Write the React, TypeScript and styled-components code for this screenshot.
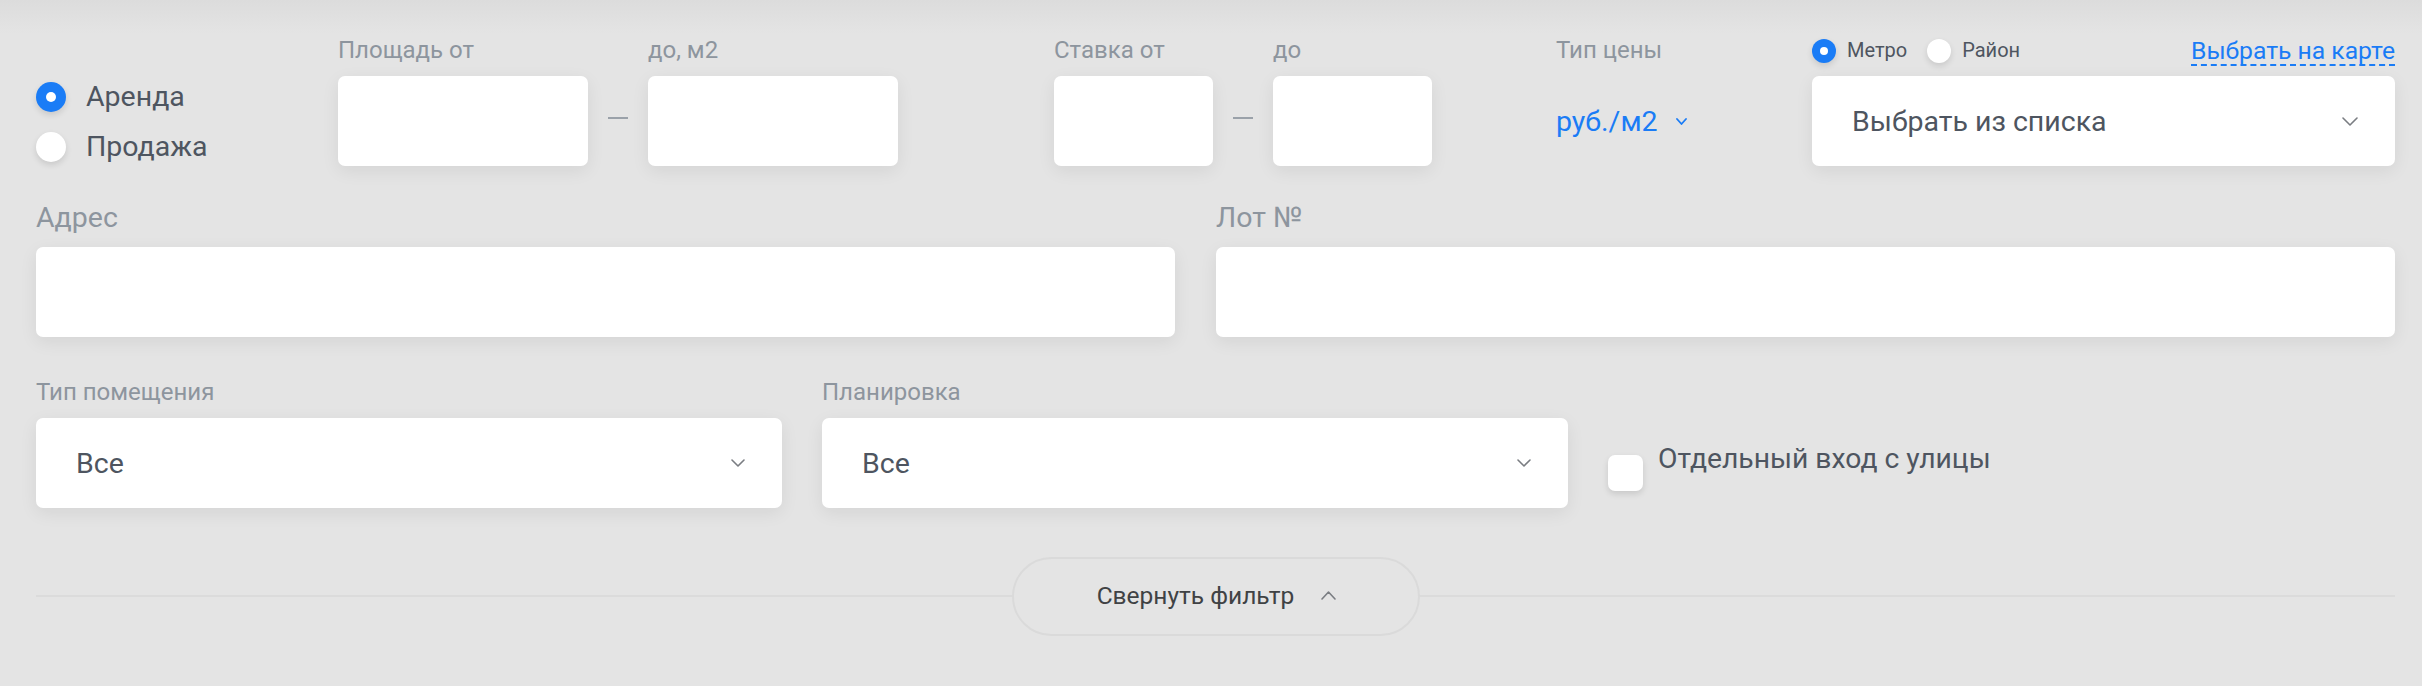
import React from "react";
import styled, { createGlobalStyle } from "styled-components";

const GlobalStyle = createGlobalStyle`
  html, body { margin: 0; padding: 0; }
  body {
    background: #e4e4e4;
    font-family: Roboto, "Liberation Sans", Arial, sans-serif;
    color: #4e5560;
  }
  * { box-sizing: border-box; }
`;

const Page = styled.div`
  width: 2422px;
  height: 686px;
  padding: 37px 27px 0 36px;
  background: linear-gradient(#dcdcdc 0px, #e4e4e4 34px, #e4e4e4 100%);
  display: flex;
  flex-direction: column;
`;

const TopRow = styled.div`
  display: flex;
  align-items: flex-start;
`;

const Section = styled.div<{ $width?: number; $offset?: number }>`
  ${(p) => (p.$width ? `width: ${p.$width}px; flex: none;` : "flex: 1;")}
  margin-left: ${(p) => p.$offset ?? 0}px;
  display: flex;
  align-items: flex-start;
`;

const RadioGroup = styled.div`
  display: flex;
  flex-direction: column;
  gap: 20px;
  padding-top: 45px;
`;

const RadioItem = styled.label<{ $small?: boolean }>`
  display: flex;
  align-items: center;
  gap: ${(p) => (p.$small ? 11 : 20)}px;
  font-size: ${(p) => (p.$small ? 20 : 28.5)}px;
  line-height: ${(p) => (p.$small ? 27 : 30)}px;
  color: #4e5560;
  cursor: pointer;
`;

const RadioDot = styled.span<{ $checked?: boolean; $size: number }>`
  width: ${(p) => p.$size}px;
  height: ${(p) => p.$size}px;
  border-radius: 50%;
  flex: none;
  background: ${(p) => (p.$checked ? "#1a7cf6" : "#ffffff")};
  box-shadow: 0 3px 6px rgba(0, 0, 0, 0.12);
  display: flex;
  align-items: center;
  justify-content: center;
  &::after {
    content: "";
    display: ${(p) => (p.$checked ? "block" : "none")};
    width: ${(p) => Math.round(p.$size / 3)}px;
    height: ${(p) => Math.round(p.$size / 3)}px;
    border-radius: 50%;
    background: #fff;
  }
`;

const Field = styled.div<{ $width?: number; $grow?: boolean }>`
  display: flex;
  flex-direction: column;
  ${(p) => (p.$width ? `width: ${p.$width}px;` : "")}
  ${(p) => (p.$grow ? "flex: 1;" : "")}
`;

const Label = styled.div<{ $big?: boolean }>`
  font-size: ${(p) => (p.$big ? 28.5 : 24)}px;
  line-height: ${(p) => (p.$big ? 32 : 27)}px;
  color: #8d959e;
  margin-bottom: ${(p) => (p.$big ? 13 : 12)}px;
  white-space: nowrap;
`;

const Box = styled.input`
  height: 90px;
  width: 100%;
  border: none;
  outline: none;
  background: #fff;
  border-radius: 7px;
  box-shadow: 0 5px 18px rgba(0, 0, 0, 0.07);
  padding: 0 40px;
  font: inherit;
  font-size: 28px;
  color: #4e5560;
`;

const Dash = styled.div`
  width: 20px;
  height: 2px;
  background: #9aa1a9;
  margin: 0 20px;
  align-self: flex-end;
  margin-bottom: 47px;
`;

const PriceType = styled.div`
  display: flex;
  align-items: center;
  gap: 18px;
  height: 90px;
  color: #1a7cf6;
  font-size: 28.5px;
  cursor: pointer;
`;

const SelectBox = styled.div`
  height: 90px;
  background: #fff;
  border-radius: 7px;
  box-shadow: 0 5px 18px rgba(0, 0, 0, 0.07);
  padding: 0 37px 0 40px;
  display: flex;
  align-items: center;
  justify-content: space-between;
  font-size: 28.5px;
  color: #4e5560;
  cursor: pointer;
`;

const MetroHeader = styled.div`
  height: 27px;
  margin-bottom: 12px;
  display: flex;
  align-items: center;
  justify-content: space-between;
`;

const RadioRow = styled.div`
  display: flex;
  align-items: center;
  gap: 20px;
`;

const MapLink = styled.a`
  font-size: 24.7px;
  line-height: 27px;
  color: #1a7cf6;
  text-decoration: none;
  border-bottom: 2px dashed #1a7cf6;
  margin-top: 2px;
  cursor: pointer;
`;

const Grid = styled.div<{ $cols: string; $gap: number; $top: number }>`
  display: grid;
  grid-template-columns: ${(p) => p.$cols};
  column-gap: ${(p) => p.$gap}px;
  margin-top: ${(p) => p.$top}px;
`;

const CheckWrap = styled.label`
  display: flex;
  align-items: flex-start;
  gap: 15px;
  padding-top: 64px;
  font-size: 28.3px;
  line-height: 32px;
  color: #4e5560;
  cursor: pointer;
`;

const CheckBox = styled.span`
  width: 35px;
  height: 36px;
  flex: none;
  margin-top: 12px;
  background: #fff;
  border-radius: 7px;
  box-shadow: 0 3px 6px rgba(0, 0, 0, 0.12);
`;

const Footer = styled.div`
  margin-top: 49px;
  height: 79px;
  display: flex;
  align-items: center;
  justify-content: center;
  position: relative;
  &::before {
    content: "";
    position: absolute;
    left: 0;
    right: 0;
    top: 38px;
    height: 2px;
    background: #dbdbdb;
  }
`;

const CollapseButton = styled.button`
  position: relative;
  width: 408px;
  height: 79px;
  border-radius: 40px;
  border: 2px solid #dadada;
  background: #e4e4e4;
  display: flex;
  align-items: center;
  justify-content: center;
  gap: 27px;
  font-family: Roboto, "Liberation Sans", Arial, sans-serif;
  font-size: 24.5px;
  color: #404244;
  cursor: pointer;
  padding: 0 0 2px 2px;
`;

const Chevron = ({ up, w = 14, h = 8, color = "#7a7d82", sw = 1.6 }: { up?: boolean; w?: number; h?: number; color?: string; sw?: number }) => (
  <svg width={w} height={h} viewBox={`0 0 ${w} ${h}`} fill="none">
    <path
      d={up ? `M1 ${h - 1} L${w / 2} 1 L${w - 1} ${h - 1}` : `M1 1 L${w / 2} ${h - 1} L${w - 1} 1`}
      stroke={color}
      strokeWidth={sw}
      strokeLinecap="round"
      strokeLinejoin="round"
    />
  </svg>
);

export default function App() {
  return (
    <>
      <GlobalStyle />
      <Page>
        <TopRow>
          <Section $width={302}>
            <RadioGroup>
              <RadioItem>
                <RadioDot $checked $size={30} />
                Аренда
              </RadioItem>
              <RadioItem>
                <RadioDot $size={30} />
                Продажа
              </RadioItem>
            </RadioGroup>
          </Section>

          <Section $width={560}>
            <Field $width={250}>
              <Label>Площадь от</Label>
              <Box />
            </Field>
            <Dash />
            <Field $width={250}>
              <Label>до, м2</Label>
              <Box />
            </Field>
          </Section>

          <Section $width={379} $offset={156}>
            <Field $width={159}>
              <Label>Ставка от</Label>
              <Box />
            </Field>
            <Dash />
            <Field $width={159}>
              <Label>до</Label>
              <Box />
            </Field>
          </Section>

          <Section $width={256} $offset={123}>
            <Field>
              <Label>Тип цены</Label>
              <PriceType>
                руб./м2
                <Chevron w={11} h={7} color="#1a7cf6" sw={1.8} />
              </PriceType>
            </Field>
          </Section>

          <Section>
            <Field $grow>
              <MetroHeader>
                <RadioRow>
                  <RadioItem $small>
                    <RadioDot $checked $size={24} />
                    Метро
                  </RadioItem>
                  <RadioItem $small>
                    <RadioDot $size={24} />
                    Район
                  </RadioItem>
                </RadioRow>
                <MapLink>Выбрать на карте</MapLink>
              </MetroHeader>
              <SelectBox>
                Выбрать из списка
                <Chevron w={16} h={9} />
              </SelectBox>
            </Field>
          </Section>
        </TopRow>

        <Grid $cols="1139px 1fr" $gap={41} $top={36}>
          <Field>
            <Label $big>Адрес</Label>
            <Box />
          </Field>
          <Field>
            <Label $big>Лот №</Label>
            <Box />
          </Field>
        </Grid>

        <Grid $cols="746px 746px 1fr" $gap={40} $top={42}>
          <Field>
            <Label>Тип помещения</Label>
            <SelectBox>
              Все
              <Chevron w={14} h={8} />
            </SelectBox>
          </Field>
          <Field>
            <Label>Планировка</Label>
            <SelectBox>
              Все
              <Chevron w={14} h={8} />
            </SelectBox>
          </Field>
          <CheckWrap>
            <CheckBox />
            Отдельный вход с улицы
          </CheckWrap>
        </Grid>

        <Footer>
          <CollapseButton>
            Свернуть фильтр
            <Chevron up w={15} h={9} />
          </CollapseButton>
        </Footer>
      </Page>
    </>
  );
}
